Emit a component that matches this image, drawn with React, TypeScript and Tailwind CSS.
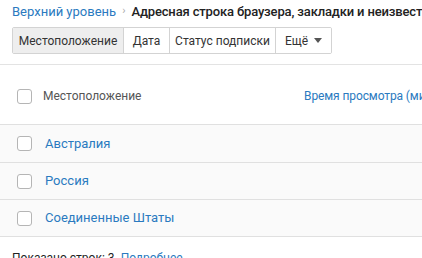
import React from "react";

const Checkbox = () => (
  <div className="w-[15px] h-[15px] rounded-[3px] border border-[#b5b5b5] bg-white shrink-0" />
);

export default function App() {
  const rows = ["Австралия", "Россия", "Соединенные Штаты"];
  return (
    <div className="w-[422px] h-[258px] overflow-hidden bg-white" style={{ fontFamily: "Roboto, 'Noto Sans', sans-serif" }}>
      <div className="flex items-center h-[22px] pl-[12px] pt-[1px] text-[13px] whitespace-nowrap">
        <span className="text-[#2a7ac0]">Верхний уровень</span>
        <span className="text-[#aaaaaa] text-[11px] mx-[6px]">›</span>
        <span className="text-[#222222] font-medium tracking-[-0.15px]">Адресная строка браузера, закладки и неизвестные источники</span>
      </div>
      <div className="pl-[12px] pt-[5px]">
        <div className="inline-flex h-[27px] border border-[#d3d3d3] rounded-[2px] text-[12px] text-[#333333] overflow-hidden">
          <div className="flex items-center px-[10px] bg-[#eeeeee] w-[111px] justify-center border-r border-[#d3d3d3]">Местоположение</div>
          <div className="flex items-center justify-center w-[46px] bg-white border-r border-[#d3d3d3]">Дата</div>
          <div className="flex items-center justify-center w-[106px] bg-white border-r border-[#d3d3d3]">Статус подписки</div>
          <div className="flex items-center justify-center w-[55px] bg-white gap-[6px]">
            <span>Ещё</span>
            <svg width="8" height="5" viewBox="0 0 8 5"><path d="M0 0h8L4 5z" fill="#555" /></svg>
          </div>
        </div>
      </div>
      <div className="mt-[10px] border-t border-[#e3e3e3]" />
      <div className="flex items-center h-[60px] pt-[3px] pl-[17px] border-b border-[#e0e0e0] bg-white whitespace-nowrap">
        <Checkbox />
        <span className="ml-[11px] text-[12px] text-[#555555]">Местоположение</span>
        <span className="ml-auto text-[12px] text-[#2a7ac0] w-[118px] overflow-hidden tracking-[-0.1px]">Время просмотра (мин.)</span>
      </div>
      {rows.map((r, i) => (
        <div key={r} className={`flex items-center ${i === 0 ? "h-[38px]" : "h-[37px]"} pl-[17px] border-b border-[#e0e0e0] bg-[#fafafa]`}>
          <Checkbox />
          <span className="ml-[13px] text-[13px] text-[#2a7ac0]">{r}</span>
        </div>
      ))}
      <div className="pl-[12px] pt-[12px] text-[12px] text-[#222222]">
        Показано строк: 3. <span className="text-[#2a7ac0]">Подробнее</span>
      </div>
    </div>
  );
}
